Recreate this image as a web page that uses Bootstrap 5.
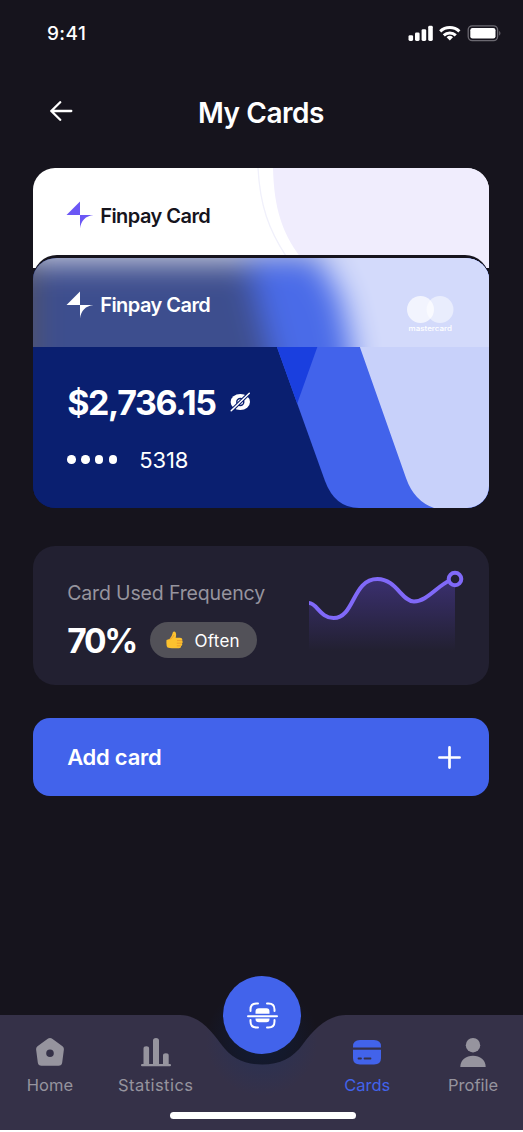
<!DOCTYPE html>
<html lang="en">
<head>
<meta charset="utf-8">
<meta name="viewport" content="width=device-width, initial-scale=1">
<title>My Cards</title>
<link href="https://cdn.jsdelivr.net/npm/bootstrap@5.3.0/dist/css/bootstrap.min.css" rel="stylesheet">
<style>
:root{--ink:#16141d;--blue:#4263eb;--muted:#96949e}
body{background:#fff;font-family:Inter,"Liberation Sans",sans-serif;line-height:1;overflow:hidden}
svg{display:block;flex-shrink:0}
.screen{height:1130px;background:var(--ink);color:#fff;overflow:hidden}
.status{height:67px;padding:0 21px 0 47px}
.clock{font-size:19px;font-weight:500;letter-spacing:.4px}
.topbar{height:101px;padding:0 50px 10px}
.title{font-size:28px;font-weight:600;letter-spacing:-.45px;padding-top:2px}
.content{padding:0 34.500px 0 33.200px}
.bank{overflow:hidden}
.bank-back{height:100px;border-radius:22px 22px 0 0;background:#fff;color:var(--ink)}
.bank-front{height:253px;margin-top:-13px;border-top:3px solid var(--ink);border-radius:24px 24px 22px 22px;background:#0a1f70}
.art{left:0;top:0}
.brandrow{padding-left:33px;height:90px}
.brand{font-size:20px;font-weight:600;letter-spacing:-.54px;margin-left:6px}
.funds{padding:38px 0 0 34px}
.amount{font-size:34px;font-weight:700;letter-spacing:-1.400px}
.number{padding:28px 0 0 34px}
.dot{width:8.5px;height:8.5px;border-radius:50%;background:#fff}
.digits{font-size:22px;letter-spacing:-.2px;margin-left:22px;padding-top:1px}
.mc{font-size:7px;font-weight:500}
.usage{height:139px;margin-top:37.500px;border-radius:22px;background:#222031;padding:0 24.500px 0 34px}
.usage-label{font-size:19.5px;color:var(--muted);letter-spacing:-.150px}
.percent{font-size:33.500px;font-weight:700;letter-spacing:-2.200px;padding-top:3px}
.often{width:107px;height:36px;background:#525158;font-size:17px;letter-spacing:.3px}
.addbtn{height:78px;margin-top:33.500px;border-radius:17px;background:var(--blue);color:#fff;border:0;padding:0 28px 0 34px;font-size:22px;font-weight:600;letter-spacing:-.25px}
.dock{height:155px}
.tabs{margin:0 -3px;padding-top:61px}
.tab{color:var(--muted);text-decoration:none;font-size:16.5px}
.tab span{padding-top:1px}
.tab.stats{letter-spacing:.45px}
.tab.on{color:var(--blue)}
.scan{left:223px;top:1px;width:78px;height:78px;border-radius:50%;background:var(--blue);border:0;padding:0}
.homebar{width:186px;height:7px;left:170px;bottom:11px;background:#fff;border-radius:4px}
</style>
</head>
<body>
<div class="screen d-flex flex-column">
  <div class="status d-flex align-items-center justify-content-between">
    <span class="clock">9:41</span>
    <svg width="94" height="18" viewBox="408 23.800 94 18">
      <g fill="#fff"><rect x="408.5" y="34" width="4.6" height="5.8" rx="1.4"/><rect x="415" y="31.2" width="4.6" height="8.6" rx="1.4"/><rect x="421.6" y="28" width="4.6" height="11.8" rx="1.4"/><rect x="428.2" y="24.6" width="4.6" height="15.2" rx="1.4"/></g>
      <g fill="none" stroke="#fff" stroke-width="3"><path d="M440.2 30.1a14 14 0 0 1 19.2 0"/><path d="M443.8 34.1a8.7 8.7 0 0 1 12 0"/></g>
      <path d="M449.8 39.3l-3.2-3.2a4.8 4.8 0 0 1 6.4 0z" fill="#fff"/>
      <rect x="468.2" y="24.6" width="29.4" height="14.8" rx="4" fill="none" stroke="#6b6971" stroke-width="1.3"/>
      <rect x="470.3" y="26.8" width="25.2" height="10.4" rx="2.2" fill="#fff"/><path d="M499.3 29.5q2.2 2.4 0 5z" fill="#7b7980"/>
    </svg>
  </div>
  <header class="topbar d-flex align-items-center">
    <svg class="mb-1" width="23" height="20" viewBox="0 0 23 20" fill="none" stroke="#fff" stroke-width="2.3" stroke-linecap="round" stroke-linejoin="round"><path d="M21.3 10H1.3M10.2 1.2L1.3 10l8.9 8.8"/></svg>
    <h1 class="title flex-grow-1 text-center mb-0 pe-4">My Cards</h1>
  </header>
  <main class="content">
    <section class="bank bank-back position-relative">
      <svg class="art position-absolute" width="456" height="112"><path d="M240 0C241 42 250 66 268 90L282 112H456V0Z" fill="#f0edfd"/><path d="M225 0C227 38 236 62 253 88" fill="none" stroke="#f0f0fb" stroke-width="1.3"/></svg>
      <div class="brandrow d-flex align-items-center position-relative pt-1">
        <svg width="28" height="28" viewBox="0 0 28 28" fill="#6b57f5"><path d="M14 .5V14H.5z"/><path d="M14 14h13.5Q15.5 15.5 14 27.5z"/></svg>
        <span class="brand" style="padding-top:1px">Finpay Card</span>
      </div>
    </section>
    <section class="bank bank-front position-relative">
      <svg class="art position-absolute" width="456" height="250" viewBox="33 258 456 250">
        <defs>
          <clipPath id="glass"><rect x="33" y="258" width="456" height="89"/></clipPath>
          <filter id="soft" filterUnits="userSpaceOnUse" x="-60" y="160" width="680" height="320" color-interpolation-filters="sRGB"><feGaussianBlur stdDeviation="15"/></filter>
        </defs>
        <g><path d="M33 258H489V508H33Z" fill="#0a1f70"/><path d="M245 258L325 481Q335 508 359 508H489V258Z" fill="#4263eb"/><path d="M245 258H349L297.2 403.5Z" fill="#1a3fdf"/><path d="M328.5 258L406 478Q414 501 434 508H530V258Z" fill="#c8d1fa"/></g>
        <g clip-path="url(#glass)">
          <g filter="url(#soft)"><path fill="#2a2838" d="M-60 160H620V480H-60Z"/><path fill="#c6cade" d="M20 168H620V262H20Z"/><path fill="#c8d1fa" d="M335 168H620V262H335Z"/><path d="M33 262H489V480H33Z" fill="#0a1f70"/><path d="M246 256L256 300L302 480H489V256Z" fill="#1a44e2"/><path d="M316 256L340 296L352 350V480H620V256Z" fill="#c8d1fa"/></g>
          <path d="M33 258H489V347H33Z" fill="#fff" opacity=".21"/>
        </g>
        <circle cx="420.5" cy="309.5" r="13.5" fill="#fff" opacity=".7"/><circle cx="440" cy="309.5" r="13.5" fill="#fff" opacity=".5"/>
        <text class="mc" x="408.5" y="330.500" fill="#fff" textLength="43.5" lengthAdjust="spacingAndGlyphs">mastercard</text>
      </svg>
      <div class="brandrow d-flex align-items-center position-relative pt-1">
        <svg width="28" height="28" viewBox="0 0 28 28" fill="#fff"><path d="M14 .5V14H.5z"/><path d="M14 14h13.5Q15.5 15.5 14 27.5z"/></svg>
        <span class="brand">Finpay Card</span>
      </div>
      <div class="funds position-relative d-flex align-items-center">
        <span class="amount">$2,736.15</span>
        <svg width="21" height="20" viewBox="0 0 21 20" style="margin-left:14px;margin-bottom:2px"><ellipse cx="10.3" cy="10" rx="9.7" ry="8" fill="#fff"/><circle cx="10.3" cy="10" r="3.5" fill="none" stroke="#0a1f70" stroke-width="1.4"/><path d="M.5 19.5L20 .5" stroke="#0a1f70" stroke-width="3.600"/><path d="M1.2 18.8L19.3 1.2" stroke="#fff" stroke-width="1.5" stroke-linecap="round"/></svg>
      </div>
      <div class="number position-relative d-flex align-items-center">
        <span class="d-flex" style="gap:5.4px"><i class="dot"></i><i class="dot"></i><i class="dot"></i><i class="dot"></i></span>
        <span class="digits">5318</span>
      </div>
    </section>

    <section class="usage d-flex align-items-start justify-content-between">
      <div style="padding-top:38px">
        <div class="usage-label">Card Used Frequency</div>
        <div class="d-flex align-items-center" style="margin-top:19px">
          <span class="percent">70%</span>
          <span class="often rounded-pill d-flex align-items-center justify-content-center" style="gap:11px;margin-left:13.500px">
            <svg width="17" height="18" viewBox="0 0 17 18"><path d="M.5 9Q0 15 1.5 16.5Q4 17.5 7 17.3H13Q15.5 17 15 15Q16.8 14.3 16 12.5Q17.3 11.3 16.2 9.8Q17 6.8 14 6.8H9.7Q11 1 8.5.5Q6.6.3 6.5 2.5Q6 5.5 3.5 8Z" fill="#fcc22f"/><path d="M11 9.6h5M10.8 12.2h5M10.8 14.8h4M3.5 8.5Q7 7 8 4" fill="none" stroke="#e8942c" stroke-width=".8"/></svg>
            <span style="padding-top:2px">Often</span>
          </span>
        </div>
      </div>
      <svg width="156" height="85" viewBox="308 567 156 85" style="margin-top:21.500px">
        <defs><linearGradient id="fade" x1="0" y1="579" x2="0" y2="651" gradientUnits="userSpaceOnUse"><stop stop-color="#6a4ee8" stop-opacity=".34"/><stop offset="1" stop-color="#6a4ee8" stop-opacity="0"/></linearGradient></defs>
        <path d="M309 603C317 603 320 618 333.500 618C355 618 352 579 377.500 579C396 579 402 601.500 414 601.500C427 601.500 442 583 455 579V651H309Z" fill="url(#fade)"/>
        <path d="M309 603C317 603 320 618 333.500 618C355 618 352 579 377.500 579C396 579 402 601.500 414 601.500C427 601.500 438 585 450 580.500" fill="none" stroke="#8069f8" stroke-width="4"/>
        <circle cx="455" cy="579" r="6.300" fill="#222031" stroke="#8069f8" stroke-width="4"/>
      </svg>
    </section>

    <button class="addbtn w-100 d-flex align-items-center justify-content-between" type="button">
      <span>Add card</span>
      <svg width="23" height="23" viewBox="0 0 23 23" stroke="#fff" stroke-width="2.700" stroke-linecap="round"><path d="M11.500 1.400V21.600M1.400 11.500H21.600"/></svg>
    </button>
  </main>

  <nav class="dock position-relative mt-auto">
    <svg class="art position-absolute" width="523" height="155" viewBox="0 975 523 155">
      <defs><radialGradient id="glow" cx="262" cy="1040" r="56" gradientUnits="userSpaceOnUse"><stop offset=".2" stop-color="#063070" stop-opacity=".24"/><stop offset="1" stop-color="#103580" stop-opacity="0"/></radialGradient></defs>
      <path d="M0 1015H180C198 1015 210 1029 221 1044C231 1058 244 1064.500 262 1064.500C280 1064.500 293 1058 303 1044C314 1029 328 1015 346 1015H523V1130H0Z" fill="#353148"/>
      <circle cx="262" cy="1040" r="56" fill="url(#glow)"/>
    </svg>
    <button class="scan position-absolute d-flex align-items-center justify-content-center" type="button" aria-label="Scan">
      <svg width="31" height="27" viewBox="0 0 31 27" fill="none" stroke="#fff" stroke-width="2" stroke-linecap="round"><path d="M3.500 9V7.500Q3.500 1.500 9.500 1.500H11M20 1.500H21.500Q27.500 1.500 27.500 7.500V9M27.500 18V19.500Q27.500 25.500 21.500 25.500H20M11 25.500H9.500Q3.500 25.500 3.500 19.500V18M1 14.200H30"/><path d="M8.500 11.800V9.500Q8.500 6.300 12 6.300H19.500Q22.500 6.300 22.500 9.500V11.800ZM8.500 16.500V17Q8.500 20.300 12 20.300H19.500Q22.500 20.300 22.500 17V16.500Z" fill="#fff" stroke="none"/></svg>
    </button>
    <div class="tabs d-flex position-relative pe-none">
      <a class="tab col d-flex flex-column align-items-center gap-2" href="#"><svg width="30" height="32" viewBox="0 0 30 32" fill="currentColor"><path fill-rule="evenodd" d="M12.400 2.900Q15 1 17.600 2.900L27.500 10.200Q29.200 11.500 28.900 13.600L27.200 26.500Q26.700 29.700 23.500 29.700H6.500Q3.300 29.700 2.800 26.500L1.100 13.600Q.8 11.500 2.500 10.200ZM15 13.500a3.800 3.800 0 1 0 0 7.600a3.800 3.800 0 0 0 0-7.600Z"/></svg><span>Home</span></a>
      <a class="tab stats col d-flex flex-column align-items-center gap-2" href="#"><svg width="30" height="32" viewBox="0 0 30 32" fill="currentColor"><path d="M2.500 28V12.500Q2.500 10.300 5.300 10.300T8.100 12.500V28ZM12 28V4.500Q12 2 15 2T18 4.500V28ZM22 28V19.500Q22 17.300 24.900 17.300T27.700 19.500V28Z"/><rect x="0" y="28" width="30" height="2.300" rx="1.100"/></svg><span>Statistics</span></a>
      <span class="col"></span>
      <a class="tab on col d-flex flex-column align-items-center gap-2" href="#" aria-current="page"><svg width="30" height="32" viewBox="0 0 30 32" fill="currentColor"><path d="M1 11.600V10.500Q1 4 8 4H22Q29 4 29 10.500V11.600Z"/><path d="M1 13.800H29V22Q29 28.500 22 28.500H8Q1 28.500 1 22Z"/><path d="M6.500 22.500H9M12.500 22.500H18.500" stroke="#353148" stroke-width="1.800" stroke-linecap="round"/></svg><span>Cards</span></a>
      <a class="tab col d-flex flex-column align-items-center gap-2" href="#"><svg width="30" height="32" viewBox="0 0 30 32" fill="currentColor"><circle cx="15" cy="9.200" r="7.200"/><path d="M2.300 31C2.300 24 8 19.800 15 19.800S27.700 24 27.700 31Z"/></svg><span>Profile</span></a>
    </div>
    <div class="homebar position-absolute"></div>
  </nav>
</div>
<script src="https://cdn.jsdelivr.net/npm/bootstrap@5.3.0/dist/js/bootstrap.bundle.min.js"></script>
</body>
</html>
